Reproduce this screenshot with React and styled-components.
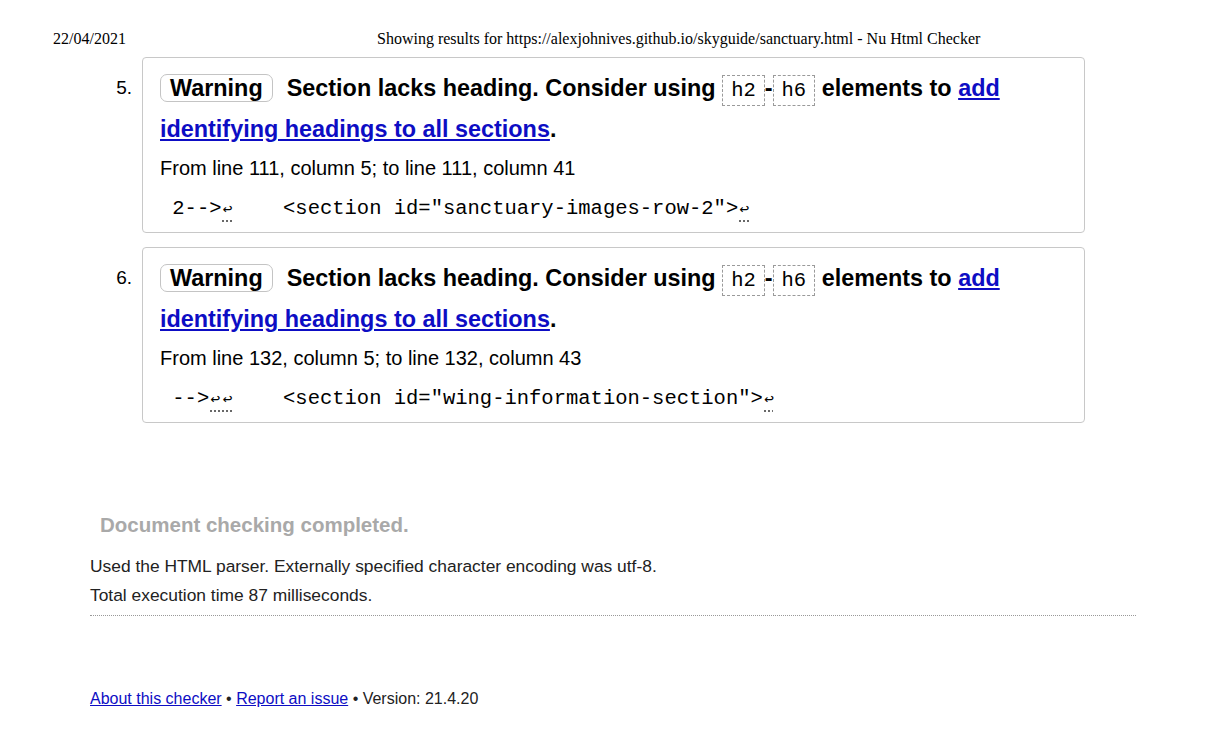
import React from 'react';
import styled, { createGlobalStyle } from 'styled-components';

const Global = createGlobalStyle`
  html, body { margin: 0; padding: 0; background: #fff; }
  body { font-family: "Liberation Sans", Arial, sans-serif; color: #000; }
`

const Page = styled.div`
  width: 1224px;
  height: 739px;
  overflow: hidden;
`
const PrintHeader = styled.div`
  display: flex;
  align-items: center;
  height: 20px;
  padding: 29px 0 0 53px;
  font-family: "Liberation Serif", "Times New Roman", serif;
  font-size: 16px;
`
const Date = styled.span`
  width: 324px;
`
const Title = styled.span``

const List = styled.ol`
  list-style: none;
  margin: 8px 0 0;
  padding: 0;
  display: flex;
  flex-direction: column;
  gap: 14px;
`
const Item = styled.li`
  display: grid;
  grid-template-columns: 132px 943px;
  column-gap: 10px;
`
const Num = styled.span`
  text-align: right;
  font-size: 19px;
  line-height: 41px;
  padding-top: 10px;
`
const Box = styled.div`
  border: 1px solid #c8c8c8;
  border-radius: 4px;
  padding: 10px 17px 6px;
  height: 158px;
`
const Message = styled.p`
  margin: 0;
  font-size: 23.4px;
  font-weight: bold;
  line-height: 41px;
`
const Badge = styled.strong`
  display: inline-block;
  border: 1.5px solid #c4c4c4;
  border-radius: 7px;
  padding: 0 9px;
  line-height: 26px;
  margin-right: 14px;
`
const Link = styled.a`
  color: #0d0dc4;
  text-decoration: underline;
`
const Code = styled.code`
  font-family: "Liberation Mono", "Courier New", monospace;
  font-weight: normal;
  font-size: 20.5px;
  border: 1px dashed #9a9a9a;
  padding: 3px 8px;
  line-height: 26px;
`
const Location = styled.p`
  margin: 0;
  font-size: 20px;
  line-height: 36px;
`
const Extract = styled.p`
  margin: 0;
  padding-top: 3px;
  font-family: "Liberation Mono", "Courier New", monospace;
  font-size: 20.5px;
  line-height: 40px;
  white-space: pre;
`
const Mark = styled.b`
  font-weight: normal;
`
const Lf = styled.span`
  font-family: "DejaVu Sans Mono", monospace;
  font-size: 16px;
  display: inline-block;
  width: 12.3px;
  text-align: center;
  text-decoration: underline dotted #444;
  text-underline-offset: 7px;
`

const Status = styled.section`
  padding: 89px 0 0 90px;
`
const Done = styled.h2`
  margin: 0 0 14px 10px;
  font-size: 20.5px;
  font-weight: bold;
  color: #a9a9a9;
  line-height: 26px;
`
const Note = styled.p`
  margin: 0;
  font-size: 17.4px;
  line-height: 29px;
  color: #222;
`
const Rule = styled.hr`
  width: 1046px;
  margin: 5px 0 0;
  border: 0;
  border-top: 1px dotted #999;
`
const Footer = styled.p`
  margin: 74px 0 0 90px;
  font-size: 16px;
  color: #222;
`
const FootLink = styled.a`
  color: #0d0dc4;
  text-decoration: underline;
`

const items = [
  {
    n: 5,
    from: 'From line 111, column 5; to line 111, column 41',
    before: ' 2-->',
    lfs: 1,
    code: '<section id="sanctuary-images-row-2">',
  },
  {
    n: 6,
    from: 'From line 132, column 5; to line 132, column 43',
    before: ' -->',
    lfs: 2,
    code: '<section id="wing-information-section">',
  },
];

function Warning({ item }) {
  return (
    <Item>
      <Num>{item.n}.</Num>
      <Box>
        <Message>
          <Badge>Warning</Badge>
          Section lacks heading. Consider using <Code>h2</Code>-<Code>h6</Code> elements to{' '}
          <Link href="#">add identifying headings to all sections</Link>.
        </Message>
        <Location>{item.from}</Location>
        <Extract>
          {item.before}
          {Array.from({ length: item.lfs }).map((_, i) => <Lf key={i}>↩</Lf>)}
          {'    '}
          <Mark>{item.code}</Mark>
          <Lf>↩</Lf>
        </Extract>
      </Box>
    </Item>
  );
}

export default function App() {
  return (
    <Page>
      <Global />
      <PrintHeader>
        <Date>22/04/2021</Date>
        <Title>Showing results for https://alexjohnives.github.io/skyguide/sanctuary.html - Nu Html Checker</Title>
      </PrintHeader>
      <List>
        {items.map(it => <Warning key={it.n} item={it} />)}
      </List>
      <Status>
        <Done>Document checking completed.</Done>
        <Note>Used the HTML parser. Externally specified character encoding was utf-8.</Note>
        <Note>Total execution time 87 milliseconds.</Note>
        <Rule />
      </Status>
      <Footer>
        <FootLink href="#">About this checker</FootLink> • <FootLink href="#">Report an issue</FootLink> • Version: 21.4.20
      </Footer>
    </Page>
  );
}
